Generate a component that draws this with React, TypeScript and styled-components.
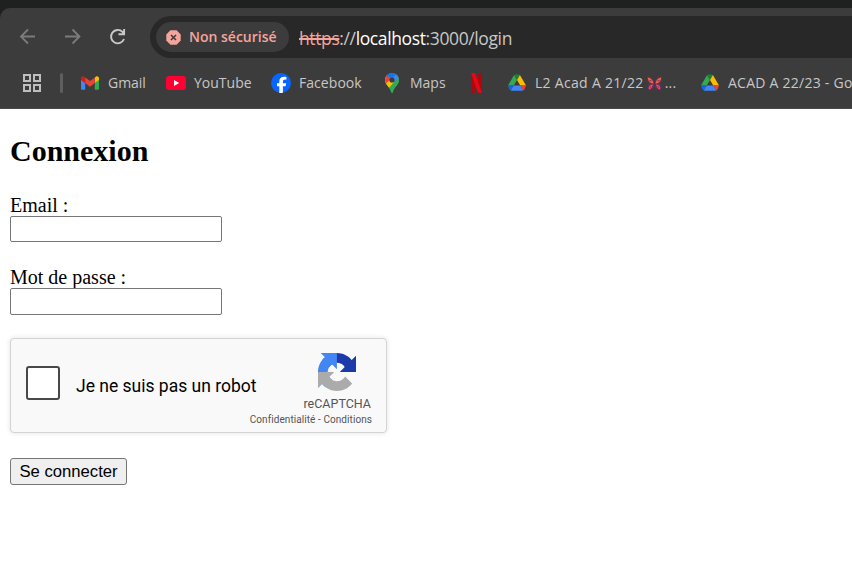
import React from "react";
import styled, { createGlobalStyle } from "styled-components";

const GlobalStyle = createGlobalStyle`
  * { box-sizing: border-box; }
  html, body { margin: 0; padding: 0; background: #fff; overflow: hidden; }
`;

const Window = styled.div`
  width: 852px;
  height: 564px;
  overflow: hidden;
  background: #fff;
`;

const BrowserTop = styled.header`
  padding-top: 8px;
  background: #1f2120;
`;

const Chrome = styled.div`
  height: 101px;
  padding-top: 8px;
  background: #3c3c3c;
  border-top-left-radius: 10px;
  border-bottom: 1px solid #4a4849;
  overflow: hidden;
`;

const Toolbar = styled.div`
  display: flex;
  align-items: center;
  height: 42px;
`;

const NavButtons = styled.div`
  display: flex;
  flex: none;
  width: 150px;
  padding-left: 17px;
  gap: 23px;
  svg { display: block; flex: none; }
`;

const AddressBar = styled.div`
  display: flex;
  align-items: center;
  flex: 1;
  height: 42px;
  padding-left: 6px;
  border-radius: 21px 0 0 21px;
  background: #282828;
`;

const SecurityChip = styled.div`
  display: flex;
  align-items: center;
  width: 133px;
  height: 30px;
  padding-left: 10px;
  gap: 8px;
  border-radius: 15px;
  background: #3c3c3c;
  svg { flex: none; }
`;

const ChipText = styled.span`
  font: 600 14px/20px "Open Sans", sans-serif;
  letter-spacing: 0;
  color: #f3a59d;
  white-space: nowrap;
`;

const Url = styled.div`
  margin-left: 10px;
  padding-top: 2px;
  font: 400 17.5px/24px "Open Sans", sans-serif;
  letter-spacing: -0.38px;
  color: #c7c7c7;
  white-space: nowrap;
`;

const Scheme = styled.span`
  color: #f3a59d;
  text-decoration: line-through;
  text-decoration-thickness: 2px;
`;

const Host = styled.span`
  color: #fff;
`;

const Bookmarks = styled.nav`
  display: flex;
  align-items: center;
  height: 50px;
`;

const AppsButton = styled.div`
  display: flex;
  flex: none;
  width: 60px;
  padding-left: 22px;
`;

const Divider = styled.div`
  flex: none;
  width: 3px;
  height: 20px;
  margin-right: 17px;
  border-radius: 2px;
  background: #5e5e5e;
`;

const Bookmark = styled.div<{ $width: number }>`
  display: flex;
  align-items: center;
  flex: none;
  gap: 8px;
  width: ${(p) => p.$width}px;
  svg { display: block; flex: none; }
`;

const BookmarkText = styled.span<{ $spacing: number }>`
  display: flex;
  align-items: center;
  font: 400 14px/20px "Open Sans", sans-serif;
  letter-spacing: ${(p) => p.$spacing}px;
  color: #c7c7c7;
  white-space: pre;
`;

const Emoji = styled.span`
  display: flex;
  margin: 0 2px;
`;

const Page = styled.main`
  padding: 25px 10px 0;
  font: 400 20px/23px "Liberation Serif", serif;
  color: #000;
`;

const Title = styled.h2`
  margin: 0 0 26px;
  font-size: 30px;
  line-height: 34px;
`;

const Field = styled.label<{ $gap: number }>`
  display: flex;
  flex-direction: column;
  align-items: flex-start;
  margin-bottom: ${(p) => p.$gap}px;
`;

const Input = styled.input<{ $height: number }>`
  width: 212px;
  height: ${(p) => p.$height}px;
  margin-top: -1px;
  padding: 1px 3px;
  border: 1px solid #767676;
  border-radius: 2px;
  background: #fff;
  font: 16px "Liberation Sans", sans-serif;
  outline: none;
`;

const Captcha = styled.section`
  display: flex;
  align-items: flex-start;
  width: 377px;
  height: 95px;
  border: 1px solid #d3d3d3;
  border-radius: 4px;
  background: #f9f9f9;
  box-shadow: 0 0 4px 1px rgba(0, 0, 0, 0.08);
`;

const CheckBox = styled.div`
  flex: none;
  width: 34px;
  height: 34px;
  margin: 27px 16px 0 15px;
  border: 2px solid #484848;
  border-radius: 3px;
  background: #fff;
`;

const CaptchaLabel = styled.span`
  width: 173px;
  margin-top: 36px;
  font: 400 17.5px/22px Roboto, sans-serif;
  white-space: nowrap;
`;

const Brand = styled.div`
  display: flex;
  flex-direction: column;
  align-items: flex-end;
  width: 123px;
  padding-top: 14px;
  color: #555;
  white-space: nowrap;
  font-family: Roboto, sans-serif;
  svg { display: block; margin-right: 16px; }
`;

const BrandName = styled.span`
  margin: 5px 1px 0 0;
  font-size: 12.5px;
  line-height: 16px;
`;

const BrandLinks = styled.span`
  margin-top: 2px;
  font-size: 10px;
  line-height: 12px;
  letter-spacing: 0.07px;
`;

const Submit = styled.button`
  display: block;
  width: 117px;
  height: 27px;
  margin-top: 25px;
  padding: 0;
  border: 1px solid #767676;
  border-radius: 3px;
  background: #efefef;
  font: 16.67px/22px "Liberation Sans", sans-serif;
  color: #000;
  white-space: nowrap;
`;

const BackIcon = () => (
  <svg width="22" height="22" viewBox="0 0 22 22" fill="none" stroke="#7b7b7b" strokeWidth="1.8">
    <path d="M18 10.5H4.5M11 3.5l-7 7 7 7" />
  </svg>
);

const ForwardIcon = () => (
  <svg width="22" height="22" viewBox="0 0 22 22" fill="none" stroke="#7b7b7b" strokeWidth="1.8">
    <path d="M3 10.5h13.5M10.5 3.5l7 7-7 7" />
  </svg>
);

const ReloadIcon = () => (
  <svg width="22" height="22" viewBox="0 0 22 22" fill="none" stroke="#c9c9c9" strokeWidth="1.9">
    <path d="M17 13a6.7 6.7 0 1 1-1.5-7.1L17 7.7M17.1 3v5.3h-5.6" />
  </svg>
);

const UnsafeIcon = () => (
  <svg width="15" height="15" viewBox="0 0 15 15">
    <path d="M4.4.3h6.2l4.1 4.1v6.2l-4.1 4.1H4.4L.3 10.6V4.4z" fill="#f3a59d" />
    <path d="M5 5l5 5M10 5l-5 5" stroke="#3c3c3c" strokeWidth="1.6" />
  </svg>
);

const AppsIcon = () => (
  <svg width="20" height="20" viewBox="0 0 20 20" fill="none" stroke="#bebebe" strokeWidth="2">
    <path d="M2 2h6v6H2zM12 2h6v6h-6zM2 12h6v6H2zM12 12h6v6h-6z" />
  </svg>
);

const GmailIcon = () => (
  <svg width="20" height="20" viewBox="0 0 20 20">
    <path d="M1 6.500l4.200 3.200v7.100H2.300A1.300 1.300 0 0 1 1 15.500z" fill="#4285f4" />
    <path d="M19 6.500l-4.200 3.200v7.100h2.900a1.300 1.300 0 0 0 1.300-1.300z" fill="#34a853" />
    <path d="M14.800 4.500l1-.8C17.200 2.700 19 3.600 19 5.300v1.600l-4.200 3.200z" fill="#fbbc04" />
    <path d="M1 6.900V5.300c0-1.700 1.800-2.600 3.200-1.600l1 .8v5.600z" fill="#c5221f" />
    <path d="M5.200 10.100V4.500L10 8.100l4.800-3.600v5.600L10 13.700z" fill="#ea4335" />
  </svg>
);

const YouTubeIcon = () => (
  <svg width="20" height="20" viewBox="0 0 20 20">
    <rect y="3" width="20" height="14" rx="3.2" fill="#ff0033" />
    <path d="M8 7l5.2 3L8 13z" fill="#fff" />
  </svg>
);

const FacebookIcon = () => (
  <svg width="20" height="20" viewBox="0 0 20 20">
    <circle cx="10" cy="10" r="10" fill="#0866ff" />
    <path d="M8.300 19.900v-6.700H6v-3h2.300V8.800c0-3.500 1.600-5.100 5-5.100.6 0 1.700.1 2.100.2v2.800c-.3 0-.7-.1-1.200-.1-1.700 0-2.300.7-2.300 2.300v1.300h3.300l-.6 3h-2.700v6.600c-1.200.3-2.400.3-3.600.1z" fill="#fff" />
  </svg>
);

const MapsIcon = () => (
  <svg width="20" height="20" viewBox="0 0 20 20">
    <defs>
      <clipPath id="pin">
        <path d="M10 0a7 7 0 0 0-7 7c0 4.700 4.700 6.500 6.100 11.900.3 1.400 1.500 1.400 1.800 0C12.300 13.500 17 11.700 17 7a7 7 0 0 0-7-7z" />
      </clipPath>
    </defs>
    <g clipPath="url(#pin)">
      <path d="M0 0h20v20H0z" fill="#34a853" />
      <path d="M-1 5l6-3 8 6-7 8-6-3z" fill="#fbbc04" />
      <path d="M4.600 2.300L9 6 4 10.500-1 8z" fill="#ea4335" />
      <path d="M4.600 2.400L9.500 6.500 16.400-1H4z" fill="#1a73e8" />
      <path d="M8.500 7.700L15 0l4 5-6 4z" fill="#4285f4" />
      <path d="M17 4.500L6.500 16.500l4 4 9-9z" fill="#34a853" />
    </g>
    <circle cx="10" cy="7" r="2.600" fill="#3c3c3c" />
  </svg>
);

const NetflixIcon = () => (
  <svg width="20" height="20" viewBox="0 0 20 20">
    <path d="M4 0h4v19.500L4 20zM11 0h4v20l-4-.5z" fill="#b1060f" />
    <path d="M4 0h4l7 20-4-.5z" fill="#e50914" />
  </svg>
);

const DriveIcon = () => (
  <svg width="20" height="20" viewBox="0 0 20 20">
    <path d="M7.100 2L10 6.900 6.700 12.500H1z" fill="#34a853" />
    <path d="M7.100 2q1-.8 2.900-.8t2.900.8L10 6.900z" fill="#188038" />
    <path d="M12.900 2l6.100 10.500h-5.700L10 6.900z" fill="#fbbc04" />
    <path d="M1 12.500h5.700l-2.900 4.900q-1-.5-1.700-1.700z" fill="#1967d2" />
    <path d="M13.300 12.500H19l-1.200 3.200q-.6 1.200-1.600 1.700z" fill="#ea4335" />
    <path d="M6.700 12.500h6.600l2.900 4.900q-.6.400-1.500.4H5.300q-.9 0-1.500-.4z" fill="#4285f4" />
  </svg>
);

const ButterflyIcon = () => (
  <svg width="17" height="17" viewBox="0 0 17 17">
    <path d="M8.500 6C6 2 3 1 1 1.500c0 3 .2 5.500 2.500 7-2.300 2-2.300 4-1.300 6.500 2.300 1.300 4.500-.5 6.300-4 1.800 3.500 4 5.300 6.300 4 1-2.500 1-4.500-1.300-6.500C15.800 7 16 4.500 16 1.500 14 1 11 2 8.500 6z" fill="#65315c" />
    <path d="M1.800 2.500C5 3 7 5.500 7.500 8.300 4.600 8.500 2 6.500 1.800 2.500zM15.200 2.500C12 3 10 5.500 9.500 8.300c2.900.2 5.500-1.800 5.700-5.800z" fill="#fa6533" />
    <path d="M7 9.200c-.6 3-2.400 5.500-4.200 5-.5-2.400.8-4.500 4.200-5zM10 9.200c.6 3 2.400 5.500 4.200 5 .5-2.400-.8-4.500-4.200-5z" fill="#ee4a58" />
    <path d="M3.500 5.500l2 .5M11.500 6l2-.5M4 12h1M12 12h1" stroke="#65315c" />
    <path d="M8.500 5.500v6M6.800 2.500l1.700 3 1.700-3" stroke="#45305b" fill="none" />
  </svg>
);

const RecaptchaLogo = () => (
  <svg width="38" height="38" viewBox="0 0 64 64">
    <path d="M64 31.955l-.033-1.370V4.687l-7.160 7.160C50.948 4.674 42.033.093 32.050.093c-10.400 0-19.622 4.960-25.458 12.640l11.736 11.860a15.550 15.550 0 0 1 4.754-5.334c2.050-1.600 4.952-2.906 8.968-2.906.485 0 .860.057 1.135.163 4.976.393 9.288 3.140 11.828 7.124l-8.307 8.307L64 31.953" fill="#1c3aa9" />
    <path d="M31.862.094l-1.370.033H4.594l7.160 7.160C4.580 13.147 0 22.060 0 32.046c0 10.400 4.960 19.622 12.640 25.458L24.500 45.768a15.550 15.550 0 0 1-5.334-4.754c-1.600-2.050-2.906-4.952-2.906-8.968 0-.485.057-.860.163-1.135.393-4.976 3.140-9.288 7.124-11.828l8.307 8.307L31.860.095" fill="#4285f4" />
    <path d="M.001 32.045l.033 1.370v25.898l7.160-7.160c5.860 7.173 14.774 11.754 24.760 11.754 10.400 0 19.622-4.960 25.458-12.640l-11.736-11.860a15.550 15.550 0 0 1-4.754 5.334c-2.050 1.600-4.952 2.906-8.968 2.906-.485 0-.860-.057-1.135-.163-4.976-.393-9.288-3.140-11.828-7.124l8.307-8.307c-10.522.040-22.400.066-27.295-.005" fill="#ababab" />
  </svg>
);

export default function App() {
  return (
    <Window>
      <GlobalStyle />
      <BrowserTop>
        <Chrome>
          <Toolbar>
            <NavButtons>
              <BackIcon />
              <ForwardIcon />
              <ReloadIcon />
            </NavButtons>
            <AddressBar>
              <SecurityChip>
                <UnsafeIcon />
                <ChipText>Non sécurisé</ChipText>
              </SecurityChip>
              <Url>
                <Scheme>https</Scheme>://<Host>localhost</Host>:3000/login
              </Url>
            </AddressBar>
          </Toolbar>
          <Bookmarks>
            <AppsButton>
              <AppsIcon />
            </AppsButton>
            <Divider />
            <Bookmark $width={86}>
              <GmailIcon />
              <BookmarkText $spacing={-0.05}>Gmail</BookmarkText>
            </Bookmark>
            <Bookmark $width={105}>
              <YouTubeIcon />
              <BookmarkText $spacing={0}>YouTube</BookmarkText>
            </Bookmark>
            <Bookmark $width={111}>
              <FacebookIcon />
              <BookmarkText $spacing={0.05}>Facebook</BookmarkText>
            </Bookmark>
            <Bookmark $width={85}>
              <MapsIcon />
              <BookmarkText $spacing={0}>Maps</BookmarkText>
            </Bookmark>
            <Bookmark $width={40}>
              <NetflixIcon />
            </Bookmark>
            <Bookmark $width={193}>
              <DriveIcon />
              <BookmarkText $spacing={0.3}>
                L2 Acad A 21/22
                <Emoji>
                  <ButterflyIcon />
                </Emoji>
                ...
              </BookmarkText>
            </Bookmark>
            <Bookmark $width={200}>
              <DriveIcon />
              <BookmarkText $spacing={0.25}>ACAD A 22/23 - Go</BookmarkText>
            </Bookmark>
          </Bookmarks>
        </Chrome>
      </BrowserTop>
      <Page>
        <Title>Connexion</Title>
        <Field $gap={24}>
          Email :
          <Input type="email" $height={26} />
        </Field>
        <Field $gap={23}>
          Mot de passe :
          <Input type="password" $height={27} />
        </Field>
        <Captcha>
          <CheckBox role="checkbox" aria-checked={false} />
          <CaptchaLabel>Je ne suis pas un robot</CaptchaLabel>
          <Brand>
            <RecaptchaLogo />
            <BrandName>reCAPTCHA</BrandName>
            <BrandLinks>Confidentialité - Conditions</BrandLinks>
          </Brand>
        </Captcha>
        <Submit type="button">Se connecter</Submit>
      </Page>
    </Window>
  );
}
